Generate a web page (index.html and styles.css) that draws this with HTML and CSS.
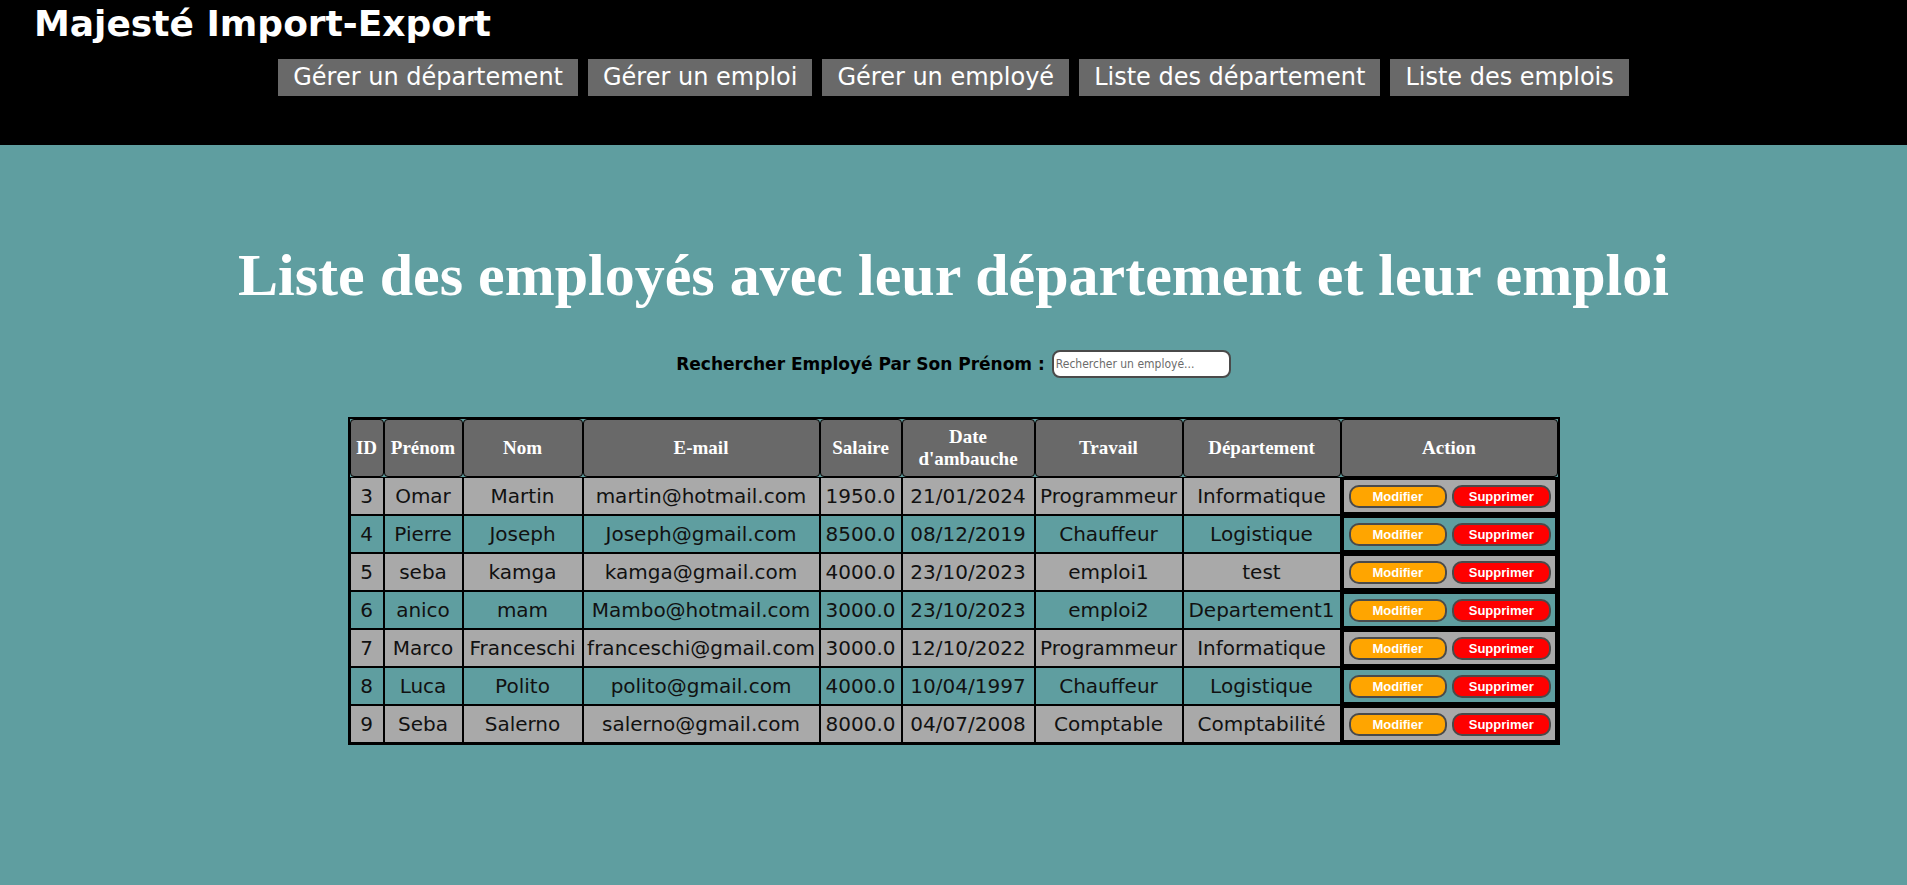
FILE: index.html
```html
<!DOCTYPE html>
<html lang="fr">
<head>
<meta charset="utf-8">
<title>Liste des employés</title>
<link rel="stylesheet" href="styles.css">
</head>
<body>
<header class="topbar">
  <div class="brand">Majesté Import-Export</div>
  <nav class="nav">
    <a class="nav-link" href="#">Gérer un département</a>
    <a class="nav-link" href="#">Gérer un emploi</a>
    <a class="nav-link" href="#">Gérer un employé</a>
    <a class="nav-link" href="#">Liste des département</a>
    <a class="nav-link" href="#">Liste des emplois</a>
  </nav>
</header>
<main class="content">
  <h1 class="page-title">Liste des employés avec leur département et leur emploi</h1>
  <div class="search">
    <label class="search-label" for="q">Rechercher Employé Par Son Prénom :</label>
    <input class="search-input" id="q" type="text" placeholder="Rechercher un employé...">
  </div>
  <table class="emp">
    <colgroup>
      <col class="c-id"><col class="c-prenom"><col class="c-nom"><col class="c-mail"><col class="c-sal"><col class="c-date"><col class="c-job"><col class="c-dep"><col class="c-act">
    </colgroup>
    <thead>
      <tr>
        <th>ID</th><th>Prénom</th><th>Nom</th><th>E-mail</th><th>Salaire</th><th>Date d'ambauche</th><th>Travail</th><th>Département</th><th>Action</th>
      </tr>
    </thead>
    <tbody>
      <tr class="odd"><td>3</td><td>Omar</td><td>Martin</td><td>martin@hotmail.com</td><td>1950.0</td><td>21/01/2024</td><td>Programmeur</td><td>Informatique</td><td class="act"><div class="act-box"><button class="btn btn-edit">Modifier</button><button class="btn btn-del">Supprimer</button></div></td></tr>
      <tr class="even"><td>4</td><td>Pierre</td><td>Joseph</td><td>Joseph@gmail.com</td><td>8500.0</td><td>08/12/2019</td><td>Chauffeur</td><td>Logistique</td><td class="act"><div class="act-box"><button class="btn btn-edit">Modifier</button><button class="btn btn-del">Supprimer</button></div></td></tr>
      <tr class="odd"><td>5</td><td>seba</td><td>kamga</td><td>kamga@gmail.com</td><td>4000.0</td><td>23/10/2023</td><td>emploi1</td><td>test</td><td class="act"><div class="act-box"><button class="btn btn-edit">Modifier</button><button class="btn btn-del">Supprimer</button></div></td></tr>
      <tr class="even"><td>6</td><td>anico</td><td>mam</td><td>Mambo@hotmail.com</td><td>3000.0</td><td>23/10/2023</td><td>emploi2</td><td>Departement1</td><td class="act"><div class="act-box"><button class="btn btn-edit">Modifier</button><button class="btn btn-del">Supprimer</button></div></td></tr>
      <tr class="odd"><td>7</td><td>Marco</td><td>Franceschi</td><td>franceschi@gmail.com</td><td>3000.0</td><td>12/10/2022</td><td>Programmeur</td><td>Informatique</td><td class="act"><div class="act-box"><button class="btn btn-edit">Modifier</button><button class="btn btn-del">Supprimer</button></div></td></tr>
      <tr class="even"><td>8</td><td>Luca</td><td>Polito</td><td>polito@gmail.com</td><td>4000.0</td><td>10/04/1997</td><td>Chauffeur</td><td>Logistique</td><td class="act"><div class="act-box"><button class="btn btn-edit">Modifier</button><button class="btn btn-del">Supprimer</button></div></td></tr>
      <tr class="odd"><td>9</td><td>Seba</td><td>Salerno</td><td>salerno@gmail.com</td><td>8000.0</td><td>04/07/2008</td><td>Comptable</td><td>Comptabilité</td><td class="act"><div class="act-box"><button class="btn btn-edit">Modifier</button><button class="btn btn-del">Supprimer</button></div></td></tr>
    </tbody>
  </table>
</main>
</body>
</html>
```
FILE: styles.css
```css
html, body {
  margin: 0;
  padding: 0;
}
body {
  background: #5F9EA0;
  min-height: 885px;
  font-family: "DejaVu Sans", Verdana, sans-serif;
}
.topbar {
  background: #000;
  height: 145px;
  box-sizing: border-box;
  padding-top: 2px;
}
.brand {
  font-family: "DejaVu Sans", sans-serif;
  font-weight: bold;
  font-size: 36px;
  color: #fff;
  padding-left: 34px;
  line-height: 44px;
}
.nav {
  display: flex;
  justify-content: center;
  gap: 10px;
  margin-top: 13px;
}
.nav-link {
  background: #696969;
  color: #fff;
  text-decoration: none;
  font-family: "DejaVu Sans", sans-serif;
  font-size: 24px;
  line-height: 29px;
  padding: 4px 15px;
}
.content {
  display: flex;
  flex-direction: column;
  align-items: center;
}
.page-title {
  margin: 96px 0 0;
  font-family: "Liberation Serif", "Times New Roman", serif;
  font-weight: bold;
  font-size: 60px;
  line-height: 69px;
  color: #fff;
}
.search {
  margin-top: 40px;
  display: flex;
  align-items: center;
  gap: 7px;
}
.search-label {
  font-family: "DejaVu Sans", sans-serif;
  font-weight: bold;
  font-size: 17px;
  color: #000;
}
.search-input {
  box-sizing: border-box;
  width: 179px;
  height: 28px;
  border: 2px solid #4a4a4a;
  border-radius: 8px;
  background: #fff;
  padding: 0 2px;
  font-family: "DejaVu Sans Condensed", "DejaVu Sans", sans-serif;
  font-size: 12px;
}
.search-input::placeholder {
  color: #6b6b6b;
}
.emp {
  margin-top: 39px;
  border: 2px solid #000;
  border-spacing: 0;
  table-layout: fixed;
  width: 1212px;
}
.c-id { width: 34px; }
.c-prenom { width: 79px; }
.c-nom { width: 120px; }
.c-mail { width: 237px; }
.c-sal { width: 82px; }
.c-date { width: 133px; }
.c-job { width: 148px; }
.c-dep { width: 158px; }
.c-act { width: 217px; }
.emp th {
  background: #696969;
  color: #fff;
  border: 1px solid #000;
  border-radius: 4px;
  font-family: "Liberation Serif", "Times New Roman", serif;
  font-weight: bold;
  font-size: 19px;
  line-height: 22px;
  padding: 6px 1px;
  height: 44px;
}
.emp td {
  border: 1px solid #000;
  text-align: center;
  font-family: "DejaVu Sans", Verdana, sans-serif;
  font-size: 20px;
  color: #111;
  padding: 0 1px;
  white-space: nowrap;
  overflow: hidden;
}
.emp tbody tr {
  height: 38px;
}
.emp tr.odd {
  background: #A9A9A9;
}
.emp tr.even {
  background: transparent;
}
.emp td.act {
  border: none;
  padding: 0;
}
.act-box {
  box-sizing: border-box;
  height: 38px;
  border: 3px solid #000;
  display: flex;
  align-items: center;
  gap: 5px;
  padding: 0 4px 0 5px;
}
.btn {
  flex: 1;
  height: 23px;
  border: 2px solid #4a4a4a;
  border-radius: 10px;
  color: #fff;
  font-family: "Liberation Sans", Arial, sans-serif;
  font-weight: bold;
  font-size: 13px;
  padding: 0;
}
.btn-edit {
  background: #FFA500;
}
.btn-del {
  background: #FF0000;
}
```
